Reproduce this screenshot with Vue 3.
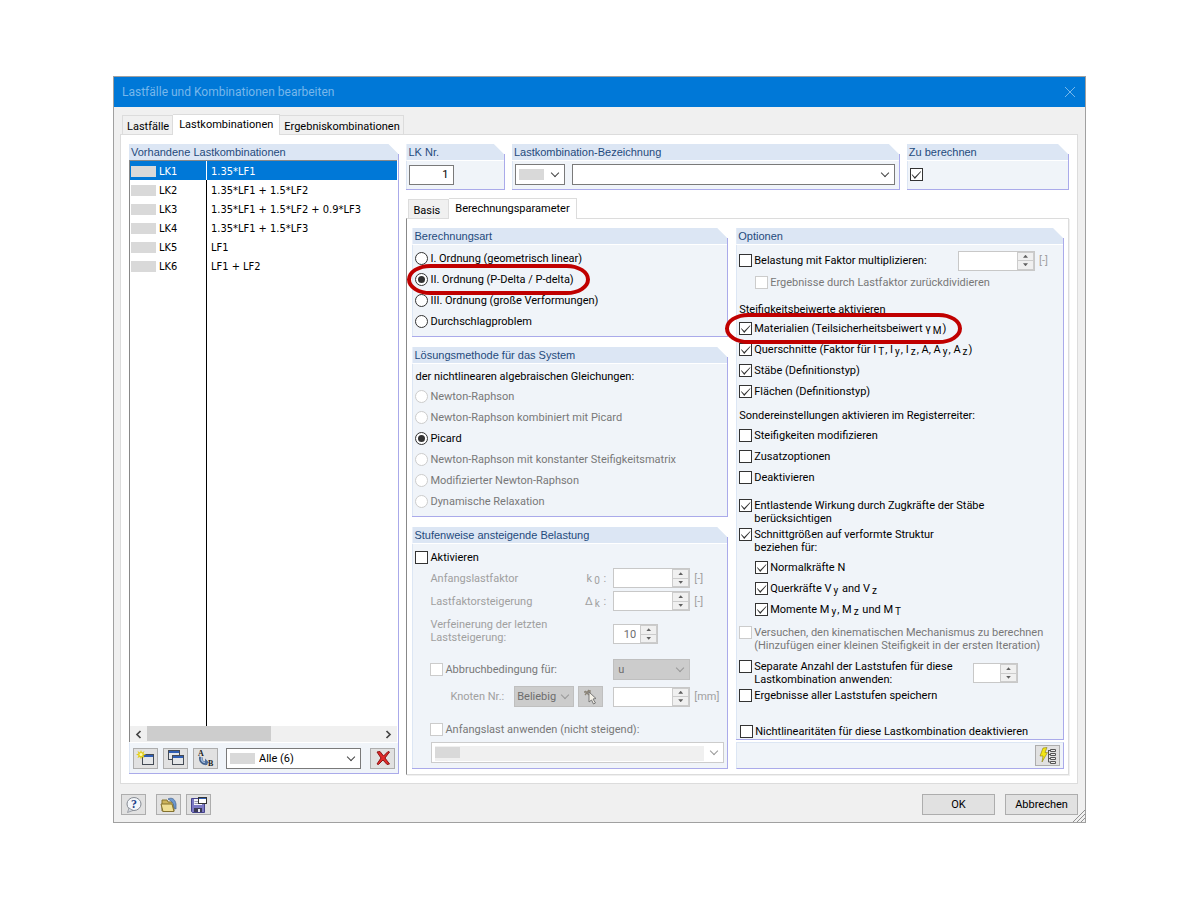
<template>
  <main class="screen">
    <section class="dialog" role="dialog" aria-labelledby="dialog-title">
      <header class="titlebar">
        <h1 id="dialog-title">Lastfälle und Kombinationen bearbeiten</h1>
        <button type="button" class="close" aria-label="Schließen">
          <svg width="12" height="12" viewBox="0 0 12 12"><path d="M1 1l10 10M11 1L1 11" fill="none" stroke="currentColor" /></svg>
        </button>
      </header>

      <div class="content">
        <nav class="tabs main-tabs">
          <button
            v-for="tab in mainTabs"
            :key="tab"
            type="button"
            class="tab"
            :class="{ active: tab === activeMain }"
            @click="activeMain = tab"
          >{{ tab }}</button>
        </nav>

        <div class="pane">
          <!-- Liste der Lastkombinationen -->
          <section class="group list-group">
            <h2>Vorhandene Lastkombinationen</h2>
            <div class="list">
              <table>
                <tbody>
                  <tr
                    v-for="item in combinations"
                    :key="item.id"
                    :class="{ selected: item.id === selected }"
                    @click="selected = item.id"
                  >
                    <td class="col-id"><span class="id-cell"><i class="swatch"></i>{{ item.id }}</span></td>
                    <td class="col-formula">{{ item.formula }}</td>
                  </tr>
                </tbody>
              </table>
            </div>
            <div class="scrollbar">
              <button type="button" class="arrow" aria-label="Nach links">
                <svg width="7" height="9" viewBox="0 0 7 9"><path d="M5.5 1L2 4.500L5.500 8" fill="none" stroke="#444" stroke-width="1.700" /></svg>
              </button>
              <div class="track"><div class="thumb"></div></div>
              <button type="button" class="arrow" aria-label="Nach rechts">
                <svg width="7" height="9" viewBox="0 0 7 9"><path d="M1.500 1L5 4.500L1.500 8" fill="none" stroke="#444" stroke-width="1.700" /></svg>
              </button>
            </div>
            <div class="list-tools">
              <button type="button" class="tool" aria-label="Neu">
                <svg width="20" height="18" viewBox="0 0 20 18">
                  <rect x="6.500" y="5.500" width="11" height="10" fill="#e4e6e8" stroke="#444b55" />
                  <path d="M7 6h10v2H7z" fill="#2f5fb5" />
                  <path d="M5 1l1 2.500L8.500 2 7.500 4.500 10 5.500 7.500 6.500l1 2.500L6 8 5 10.500 4 8 1.500 9l1-2.500L0 5.500l2.500-1L1.500 2 4 3.500z" fill="#e3cf1c" />
                  <circle cx="5" cy="5.500" r="1.500" fill="#fffbb0" />
                </svg>
              </button>
              <button type="button" class="tool" aria-label="Kopieren">
                <svg width="20" height="18" viewBox="0 0 20 18">
                  <rect x="2.500" y="1.500" width="11" height="9" fill="#e4e6e8" stroke="#444b55" />
                  <path d="M3 2h10v2H3z" fill="#2f5fb5" />
                  <rect x="6.500" y="6.500" width="11" height="9" fill="#e4e6e8" stroke="#444b55" />
                  <path d="M7 7h10v2H7z" fill="#2f5fb5" />
                </svg>
              </button>
              <button type="button" class="tool" aria-label="Umnummerieren">
                <svg width="20" height="18" viewBox="0 0 20 18">
                  <text x="2" y="7" class="glyph">A</text>
                  <text x="12" y="17" class="glyph">B</text>
                  <path d="M5 8c-1 4 2 7 6 6" fill="none" stroke="#405c86" stroke-width="3.500" />
                  <path d="M5.500 8c-1 4 2 6 5 5.500" fill="none" stroke="#9db9de" stroke-width="1.500" />
                  <path d="M9 9.500l4 4-4 3z" fill="#4f6f9e" />
                </svg>
              </button>
              <div class="combo filter">
                <i class="swatch"></i>
                <select aria-label="Filter"><option>Alle (6)</option></select>
              </div>
              <button type="button" class="tool" aria-label="Löschen">
                <svg width="18" height="16" viewBox="0 0 18 16">
                  <path d="M3 2l3-.500 3.500 4.500L14 1.500l1.500.5-4.500 6 4.500 6-2.500.500L9 10l-4.500 4.500L3 14l4-6z" fill="#e02a2a" stroke="#8c1515" />
                </svg>
              </button>
            </div>
          </section>

          <div class="details">
            <div class="head-row">
              <section class="group number-group">
                <h2>LK Nr.</h2>
                <div class="head-body"><input class="number" type="text" value="1" aria-label="LK Nr." /></div>
              </section>
              <section class="group name-group">
                <h2>Lastkombination-Bezeichnung</h2>
                <div class="head-body">
                  <div class="combo type-combo">
                    <i class="swatch"></i>
                    <select aria-label="Typ"><option></option></select>
                  </div>
                  <div class="combo name-combo">
                    <select aria-label="Lastkombination-Bezeichnung"><option></option></select>
                  </div>
                </div>
              </section>
              <section class="group calc-group">
                <h2>Zu berechnen</h2>
                <div class="head-body"><input type="checkbox" checked aria-label="Zu berechnen" /></div>
              </section>
            </div>

            <nav class="tabs sub-tabs">
              <button
                v-for="tab in subTabs"
                :key="tab"
                type="button"
                class="tab"
                :class="{ active: tab === activeSub }"
                @click="activeSub = tab"
              >{{ tab }}</button>
            </nav>

            <div class="params">
              <div class="column left">
                <section class="group">
                  <h2>Berechnungsart</h2>
                  <div class="body">
                    <label v-for="type in types" :key="type" class="check row">
                      <input v-model="calcType" type="radio" name="type" :value="type" />
                      <span>{{ type }}</span>
                      <i v-if="type === types[1]" class="marker marker-type"></i>
                    </label>
                  </div>
                </section>

                <section class="group">
                  <h2>Lösungsmethode für das System</h2>
                  <div class="body method-body">
                    <p class="caption">der nichtlinearen algebraischen Gleichungen:</p>
                    <label v-for="name in methods" :key="name" class="check row">
                      <input v-model="method" type="radio" name="method" :value="name" :disabled="name !== 'Picard'" />
                      <span>{{ name }}</span>
                    </label>
                  </div>
                </section>

                <section class="group steps-group">
                  <h2>Stufenweise ansteigende Belastung</h2>
                  <div class="body steps">
                    <label class="check row">
                      <input type="checkbox" />
                      <span>Aktivieren</span>
                    </label>
                    <div class="step">
                      <label for="k0">Anfangslastfaktor</label>
                      <span class="symbol">k<sub>0</sub> :</span>
                      <div class="spin">
                        <input id="k0" type="text" disabled />
                        <span class="updown"><button type="button" disabled aria-label="Mehr"></button><button type="button" disabled aria-label="Weniger"></button></span>
                      </div>
                      <span class="unit">[-]</span>
                    </div>
                    <div class="step">
                      <label for="dk">Lastfaktorsteigerung</label>
                      <span class="symbol">Δ<sub>k</sub> :</span>
                      <div class="spin">
                        <input id="dk" type="text" disabled />
                        <span class="updown"><button type="button" disabled aria-label="Mehr"></button><button type="button" disabled aria-label="Weniger"></button></span>
                      </div>
                      <span class="unit">[-]</span>
                    </div>
                    <div class="step refine">
                      <label for="refine">Verfeinerung der letzten<br />Laststeigerung:</label>
                      <span class="symbol"></span>
                      <div class="spin small">
                        <input id="refine" type="text" value="10" disabled />
                        <span class="updown"><button type="button" disabled aria-label="Mehr"></button><button type="button" disabled aria-label="Weniger"></button></span>
                      </div>
                      <span class="unit"></span>
                    </div>
                    <div class="step stop">
                      <label class="check">
                        <input type="checkbox" disabled />
                        <span>Abbruchbedingung für:</span>
                      </label>
                      <span class="symbol"></span>
                      <div class="combo flat">
                        <select disabled aria-label="Abbruchbedingung"><option>u</option></select>
                      </div>
                      <span class="unit"></span>
                    </div>
                    <div class="step node">
                      <div class="node-pick">
                        <label for="node">Knoten Nr.:</label>
                        <div class="combo flat node-combo">
                          <select id="node" disabled><option>Beliebig</option></select>
                        </div>
                        <button type="button" class="tool pick" disabled aria-label="Knoten wählen">
                          <svg width="18" height="18" viewBox="0 0 18 18">
                            <path d="M3 3l4 4M7 2L3 7M2 4h6M8 2v5" stroke="#8b8478" stroke-width="1.300" fill="none" />
                            <path d="M7 4l7 6.500-3 .5 2.500 4-2 1-2-4L7 14z" fill="#f4f1e8" stroke="#777" />
                          </svg>
                        </button>
                      </div>
                      <span class="symbol"></span>
                      <div class="spin">
                        <input type="text" disabled aria-label="Grenzwert" />
                        <span class="updown"><button type="button" disabled aria-label="Mehr"></button><button type="button" disabled aria-label="Weniger"></button></span>
                      </div>
                      <span class="unit">[mm]</span>
                    </div>
                    <label class="check initial">
                      <input type="checkbox" disabled />
                      <span>Anfangslast anwenden (nicht steigend):</span>
                    </label>
                    <div class="combo initial-combo">
                      <i class="swatch"></i>
                      <select disabled aria-label="Anfangslast"><option></option></select>
                    </div>
                  </div>
                </section>
              </div>

              <div class="column right">
                <section class="group options-group">
                  <h2>Optionen</h2>
                  <div class="body options">
                    <div class="factor">
                      <label class="check">
                        <input type="checkbox" />
                        <span>Belastung mit Faktor multiplizieren:</span>
                      </label>
                      <div class="spin">
                        <input type="text" disabled aria-label="Faktor" />
                        <span class="updown"><button type="button" disabled aria-label="Mehr"></button><button type="button" disabled aria-label="Weniger"></button></span>
                      </div>
                      <span class="unit">[-]</span>
                    </div>
                    <label class="check row sub">
                      <input type="checkbox" disabled />
                      <span>Ergebnisse durch Lastfaktor zurückdividieren</span>
                    </label>

                    <p class="caption stiffness">Steifigkeitsbeiwerte aktivieren</p>
                    <label v-for="(text, i) in stiffness" :key="text" class="check row">
                      <input type="checkbox" checked />
                      <span><template v-for="(part, n) in split(text)" :key="n"><sub v-if="n % 2">{{ part }}</sub><template v-else>{{ part }}</template></template></span>
                      <i v-if="i === 0" class="marker marker-material"></i>
                    </label>

                    <p class="caption special">Sondereinstellungen aktivieren im Registerreiter:</p>
                    <label v-for="text in special" :key="text" class="check row">
                      <input type="checkbox" />
                      <span>{{ text }}</span>
                    </label>

                    <label class="check relief">
                      <input type="checkbox" checked />
                      <span>Entlastende Wirkung durch Zugkräfte der Stäbe<br />berücksichtigen</span>
                    </label>
                    <label class="check forces">
                      <input type="checkbox" checked />
                      <span>Schnittgrößen auf verformte Struktur<br />beziehen für:</span>
                    </label>
                    <div class="force-list">
                      <label v-for="text in forces" :key="text" class="check row sub">
                        <input type="checkbox" checked />
                        <span><template v-for="(part, n) in split(text)" :key="n"><sub v-if="n % 2">{{ part }}</sub><template v-else>{{ part }}</template></template></span>
                      </label>
                    </div>
                    <label class="check mechanism">
                      <input type="checkbox" disabled />
                      <span>Versuchen, den kinematischen Mechanismus zu berechnen<br />(Hinzufügen einer kleinen Steifigkeit in der ersten Iteration)</span>
                    </label>
                    <div class="separate">
                      <label class="check">
                        <input type="checkbox" />
                        <span>Separate Anzahl der Laststufen für diese<br />Lastkombination anwenden:</span>
                      </label>
                      <div class="spin small">
                        <input type="text" disabled aria-label="Anzahl der Laststufen" />
                        <span class="updown"><button type="button" disabled aria-label="Mehr"></button><button type="button" disabled aria-label="Weniger"></button></span>
                      </div>
                    </div>
                    <label class="check save">
                      <input type="checkbox" />
                      <span>Ergebnisse aller Laststufen speichern</span>
                    </label>
                    <label class="check nonlinear">
                      <input type="checkbox" />
                      <span>Nichtlinearitäten für diese Lastkombination deaktivieren</span>
                    </label>
                  </div>
                </section>
                <div class="option-tools">
                  <button type="button" class="tool" aria-label="Berechnungsparameter">
                    <svg width="20" height="18" viewBox="0 0 20 18">
                      <path d="M5 1l4-.500-2 5h2.500L4 15l1-6H2z" fill="#f2e614" stroke="#8a7d10" stroke-width=".6" />
                      <path d="M10.500 3v12M10.500 3.500h2M10.500 7.500h2M10.500 11.500h2M10.500 15h2" stroke="#555" fill="none" />
                      <path d="M12.500 2.500h5v2h-5zM12.500 6.500h5v2h-5zM12.500 10.500h5v2h-5zM12.500 14.500h5v2h-5z" fill="#eee" stroke="#555" />
                    </svg>
                  </button>
                </div>
              </div>
            </div>
          </div>
        </div>

        <footer class="footer">
          <button type="button" class="tool help" aria-label="Hilfe">
            <svg width="18" height="18" viewBox="0 0 18 18">
              <ellipse cx="9" cy="8" rx="7" ry="6.500" fill="#f3f6fa" stroke="#868b93" />
              <path d="M4 12l-1.500 4.500L8 14.500z" fill="#d5d9df" stroke="#868b93" stroke-width=".7" />
              <text x="6" y="12" class="question">?</text>
            </svg>
          </button>
          <button type="button" class="tool open" aria-label="Öffnen">
            <svg width="20" height="18" viewBox="0 0 20 18">
              <path d="M3 4h5l1 2h6v9H3z" fill="#cdb45b" stroke="#84722f" />
              <path d="M9 3c4-2 7 0 8 5v5l-2-1c0-4-2-7-6-9z" fill="#6f9bd0" stroke="#3f6090" stroke-width=".7" />
              <path d="M2 8h11l2 7.500H4z" fill="#efdf94" stroke="#84722f" />
            </svg>
          </button>
          <button type="button" class="tool" aria-label="Speichern">
            <svg width="20" height="18" viewBox="0 0 20 18">
              <path d="M2.500 2.500h13v14h-12l-1-1z" fill="#7c79c4" stroke="#45438a" />
              <path d="M5 3h8v6H5z" fill="#f4f4fa" />
              <path d="M5.500 5.500h5M5.500 7.500h5" stroke="#9a9ab2" />
              <path d="M5 12h8v4H5z" fill="#3c3c55" />
              <path d="M9 13h2v3H9z" fill="#e8e8f2" />
              <rect x="9.500" y="1.500" width="8" height="6" fill="#fff" stroke="#333" />
              <path d="M10 2h7v1h-7z" fill="#2f5fb5" />
            </svg>
          </button>
          <span class="spacer"></span>
          <button type="button" class="push">OK</button>
          <button type="button" class="push">Abbrechen</button>
        </footer>
      </div>
      <svg class="grip" width="12" height="12" viewBox="0 0 12 12"><path d="M0 12L12 0M4 12l8-8M8 12l4-4" fill="none" stroke="#909090" /></svg>
    </section>
  </main>
</template>

<script setup>
import { ref } from 'vue'

const mainTabs = ['Lastfälle', 'Lastkombinationen', 'Ergebniskombinationen']
const subTabs = ['Basis', 'Berechnungsparameter']
const activeMain = ref('Lastkombinationen')
const activeSub = ref('Berechnungsparameter')

const combinations = [
  { id: 'LK1', formula: '1.35*LF1' },
  { id: 'LK2', formula: '1.35*LF1 + 1.5*LF2' },
  { id: 'LK3', formula: '1.35*LF1 + 1.5*LF2 + 0.9*LF3' },
  { id: 'LK4', formula: '1.35*LF1 + 1.5*LF3' },
  { id: 'LK5', formula: 'LF1' },
  { id: 'LK6', formula: 'LF1 + LF2' }
]
const selected = ref('LK1')

const types = [
  'I. Ordnung (geometrisch linear)',
  'II. Ordnung (P-Delta / P-delta)',
  'III. Ordnung (große Verformungen)',
  'Durchschlagproblem'
]
const calcType = ref(types[1])

const methods = [
  'Newton-Raphson',
  'Newton-Raphson kombiniert mit Picard',
  'Picard',
  'Newton-Raphson mit konstanter Steifigkeitsmatrix',
  'Modifizierter Newton-Raphson',
  'Dynamische Relaxation'
]
const method = ref('Picard')

// "_x" steht für einen tiefgestellten Index x
const stiffness = [
  'Materialien (Teilsicherheitsbeiwert γ_M)',
  'Querschnitte (Faktor für I_T, I_y, I_z, A, A_y, A_z)',
  'Stäbe (Definitionstyp)',
  'Flächen (Definitionstyp)'
]
const special = ['Steifigkeiten modifizieren', 'Zusatzoptionen', 'Deaktivieren']
const forces = ['Normalkräfte N', 'Querkräfte V_y and V_z', 'Momente M_y, M_z und M_T']

const split = (text) => text.split(/_(\w)/)
</script>

<style>
body {
  margin: 0;
  background: #fff;
}
</style>

<style scoped>
.screen {
  padding: 76px 114px 76px 113px;
  font-family: Roboto, 'DejaVu Sans Condensed', sans-serif;
  font-size: 11px;
  line-height: 13px;
  color: #000;
}

.screen *,
.screen *::before,
.screen *::after {
  box-sizing: border-box;
}

button,
input,
select {
  font: inherit;
  color: inherit;
  margin: 0;
}

p,
h1,
h2 {
  margin: 0;
  font-weight: 400;
}

.dialog {
  position: relative;
  background: #f0f0f0;
  border: 1px solid #a0a0a0;
}

.titlebar {
  display: flex;
  align-items: center;
  justify-content: space-between;
  height: 30px;
  padding: 0 9px 0 8px;
  background: #0078d7;
  color: #77b7eb;
}

.titlebar h1 {
  font: 12px/16px Roboto, 'Open Sans', sans-serif;
}

.close {
  display: flex;
  padding: 0;
  border: 0;
  background: none;
}

.content {
  padding: 7px 7px 7px 6px;
}

/* Registerkarten */
.tabs {
  display: flex;
  align-items: flex-end;
}

.main-tabs {
  height: 20px;
  padding-left: 2px;
}

.sub-tabs {
  height: 20px;
  margin-top: 8px;
  padding-left: 2px;
}

.tab {
  height: 19px;
  padding: 2px 4px 0;
  border: 1px solid #dcdcdc;
  border-bottom: 0;
  background: #f0f0f0;
  white-space: nowrap;
}

.tab + .tab {
  border-left: 0;
}

.main-tabs .tab {
  padding-right: 3px;
}

.sub-tabs .tab {
  padding-right: 8px;
}

.tab.active {
  position: relative;
  height: 21px;
  margin-bottom: -1px;
  padding: 0 6px 2px;
  background: #fff;
}

.pane {
  display: flex;
  gap: 7px;
  padding: 9px 8px 8px 8px;
  border: 1px solid #dcdcdc;
  background: #fff;
}

/* Gruppenrahmen mit abgeschrägter Ecke */
.group {
  display: flex;
  flex-direction: column;
  padding-right: 1px;
  border-bottom: 1px solid #aaaaea;
  background: linear-gradient(#aaaaea, #aaaaea) right bottom / 1px calc(100% - 10px) no-repeat;
}

.group h2 {
  height: 17px;
  padding-left: 2px;
  border-bottom: 1px solid #fff;
  background: #dce6f4;
  color: #1f4a7c;
  font: 11px/17px 'Liberation Sans', Arial, sans-serif;
  clip-path: polygon(0 0, calc(100% - 10px) 0, 100% 10px, 100% 100%, 0 100%);
  white-space: nowrap;
}

.group.list-group h2 {
  height: 16px;
  border-bottom: 0;
}

.body,
.head-body {
  flex: 1;
  background: #f0f4f9;
  border-left: 1px solid #dce6f4;
}

.list-group {
  flex: 270 1 0;
  min-width: 0;
  margin-bottom: 1px;
}

.list {
  flex: 1;
  overflow: hidden;
  border: 1px solid #888;
  border-width: 1px 0 0 1px;
  background: linear-gradient(#000, #000) 76px 0 / 1px 100% no-repeat #fff;
  margin-right: 1px;
}

.list table {
  width: 100%;
  border-collapse: collapse;
  font-family: 'DejaVu Sans Condensed', 'DejaVu Sans', sans-serif;
}

.list td {
  height: 19px;
  padding: 1px 0 0;
}

.list .col-id {
  width: 76px;
}

.id-cell {
  display: flex;
  align-items: center;
  gap: 3px;
  padding-left: 1px;
}

.list .col-formula {
  padding-left: 5px;
}

.selected {
  background: #0078d7;
  color: #fff;
}

.selected .col-formula {
  background: linear-gradient(#fff, #fff) 0 0 / 1px 100% no-repeat;
}

.swatch {
  flex: none;
  width: 25px;
  height: 11px;
  background: #d9d9d9;
}

.scrollbar {
  display: flex;
  height: 16px;
  margin-right: 1px;
  border-left: 1px solid #888;
  background: #f0f0f0;
}

.arrow {
  display: flex;
  align-items: center;
  justify-content: center;
  width: 17px;
  padding: 0;
  border: 0;
  background: none;
}

.track {
  flex: 1;
}

.thumb {
  width: 53%;
  height: 15px;
  background: #cdcdcd;
}

.list-tools {
  display: flex;
  align-items: center;
  gap: 5px;
  height: 31px;
  padding: 0 3px;
  border-top: 1px solid #fff;
  border-left: 1px solid #dce6f4;
  background: #f0f4f9;
}

.tool {
  display: flex;
  flex: none;
  align-items: center;
  justify-content: center;
  width: 25px;
  height: 21px;
  padding: 0;
  border: 1px solid #adadad;
  background: #e1e1e1;
}

.glyph {
  font: bold 8px 'Liberation Serif', serif;
  fill: #222;
}

.question {
  font: bold 12px 'Liberation Serif', serif;
  fill: #213f86;
}

/* Auswahlfelder */
.combo {
  position: relative;
  display: flex;
  align-items: center;
  height: 21px;
  border: 1px solid #7a7a7a;
  background: #fff;
}

.combo::after {
  content: '';
  position: absolute;
  right: 6px;
  top: 5px;
  width: 6px;
  height: 6px;
  border: solid #444;
  border-width: 0 1px 1px 0;
  transform: rotate(45deg);
  pointer-events: none;
}

.combo .swatch {
  margin-left: 3px;
}

.combo select {
  flex: 1;
  min-width: 0;
  height: 100%;
  padding: 0 18px 0 4px;
  border: 0;
  background: none;
  appearance: none;
  opacity: 1;
}

.filter {
  flex: 1;
  margin: 0 4px 0 3px;
}

.combo.flat {
  background: #cccccc;
  border-color: #bfbfbf;
  color: #6d6d6d;
}

.combo.flat::after,
.initial-combo::after {
  border-color: #999;
}

.details {
  flex: 664 1 0;
  min-width: 0;
  display: flex;
  flex-direction: column;
}

.head-row {
  display: flex;
  gap: 7px;
}

.number-group {
  flex: 98 1 0;
}

.name-group {
  flex: 389 1 0;
}

.calc-group {
  flex: 162 1 0;
}

.head-body {
  display: flex;
  align-items: center;
  gap: 7px;
  min-height: 28px;
  padding: 0 4px 1px 2px;
}

.number {
  width: 45px;
  height: 20px;
  padding: 0 5px;
  border: 1px solid #7a7a7a;
  text-align: right;
}

.type-combo {
  width: 50px;
}

.name-combo {
  flex: 1;
}

/* Parameterseite */
.params {
  flex: 1;
  display: flex;
  gap: 8px;
  padding: 9px 4px 5px 5px;
  border: 1px solid #dcdcdc;
  border-left-color: #888;
  box-shadow: 1px 1px 0 #f0f0f0;
}

.column {
  display: flex;
  flex-direction: column;
  min-width: 0;
}

.left {
  flex: 316 1 0;
  gap: 10px;
}

.right {
  flex: 328 1 0;
  gap: 2px;
}

.body {
  padding: 3px 2px 4px;
}

.steps-group,
.options-group {
  flex: 1;
}

.check {
  position: relative;
  display: flex;
  align-items: flex-start;
  gap: 2px;
  white-space: nowrap;
}

.row {
  height: 21px;
  align-items: center;
}

.check input {
  flex: none;
}

.check input:disabled + span {
  color: #787878;
}

input[type='checkbox'],
input[type='radio'] {
  display: block;
  width: 13px;
  height: 13px;
  border: 1px solid #333;
  background: #fff;
  appearance: none;
}

input[type='radio'] {
  border-radius: 50%;
}

input[type='checkbox']:disabled,
input[type='radio']:disabled {
  border-color: #ccc;
}

input[type='radio']:checked::before {
  content: '';
  display: block;
  width: 7px;
  height: 7px;
  margin: 2px;
  border-radius: 50%;
  background: #333;
}

input[type='checkbox']:checked::before {
  content: '';
  display: block;
  width: 11px;
  height: 11px;
  background: #333;
  clip-path: polygon(1px 5px, 4px 8px, 10px 2px, 10px 3px, 4px 10px, 1px 6px);
}

sub {
  margin: 0 1px 0 2px;
  font-size: 10px;
  line-height: 1px;
  vertical-align: -2px;
}

.caption {
  height: 16px;
  line-height: 16px;
  white-space: nowrap;
}

.method-body .caption {
  margin: 2px 0 1px;
}

/* rote Hervorhebungen */
.marker {
  position: absolute;
  z-index: 1;
  top: -5px;
  height: 31px;
  border: 4px solid #c00000;
  border-radius: 24px / 16px;
}

.marker-type {
  left: -8px;
  width: 183px;
}

.marker-material {
  left: -14px;
  width: 237px;
}

/* Laststufen */
.steps .step {
  display: grid;
  grid-template-columns: 1fr auto 77px 35px;
  align-items: center;
  min-height: 20px;
  margin-bottom: 3px;
  padding-left: 15px;
  color: #a0a0a0;
  white-space: nowrap;
}

.symbol {
  padding-right: 7px;
}

.unit {
  padding-left: 4px;
  color: #a0a0a0;
}

.steps .refine {
  margin-top: 7px;
}

.steps .refine .spin {
  align-self: end;
}

.steps .stop {
  margin: 15px 0 6px;
}

.node-pick {
  display: flex;
  align-items: center;
  justify-content: flex-end;
  gap: 4px;
}

.node-pick label {
  margin-right: 6px;
}

.node-pick .combo {
  width: 60px;
}

.node-combo select {
  padding-left: 2px;
  padding-right: 0;
}

.node-combo::after {
  right: 5px;
}

.steps .node .symbol {
  padding-right: 10px;
}

.pick {
  border-color: #bfbfbf;
  background: #ccc;
}

.initial {
  margin: 16px 0 6px 15px;
}

.initial-combo {
  margin: 0 1px 0 16px;
  border-color: #ccc;
  background: linear-gradient(#f0f0f0, #f0f0f0) 3px 3px / calc(100% - 22px) 15px no-repeat #fff;
}

.spin {
  display: flex;
  width: 77px;
  height: 20px;
  border: 1px solid #c8c8c8;
  background: #fff;
}

.spin.small {
  width: 45px;
}

.spin input {
  flex: 1;
  min-width: 0;
  padding: 0 4px;
  border: 0;
  background: none;
  color: #6d6d6d;
  text-align: right;
}

.updown {
  display: flex;
  flex-direction: column;
  gap: 1px;
  width: 17px;
  padding: 1px;
  background: #ccc;
}

.updown button {
  display: flex;
  flex: 1;
  align-items: center;
  justify-content: center;
  padding: 0;
  border: 0;
  background: #f0f0f0;
}

.updown button::before {
  content: '';
  width: 5px;
  height: 3px;
  background: #606060;
  clip-path: polygon(50% 0, 100% 100%, 0 100%);
}

.updown button:last-child::before {
  clip-path: polygon(0 0, 100% 0, 50% 100%);
}

/* Optionen */
.options {
  padding: 4px 2px 1px;
}

.factor,
.separate {
  display: flex;
  align-items: center;
  height: 23px;
}

.factor .check,
.separate .check {
  flex: 1;
}

.factor .unit {
  width: 26px;
}

.options .sub {
  margin-left: 16px;
}

.stiffness {
  margin-top: 9px;
}

.special {
  margin: 6px 0 1px;
}

.relief {
  margin: 11px 0 3px;
}

.force-list {
  margin: 3px 0 6px;
}

.separate {
  height: 26px;
  margin: 8px 0 3px;
}

.separate .spin {
  margin-right: 43px;
}

.nonlinear {
  margin: 23px 0 0 1px;
}

.option-tools {
  display: flex;
  align-items: center;
  justify-content: flex-end;
  height: 27px;
  padding-right: 3px;
  border: 1px solid #aaaaea;
  border-color: #dce6f4 #aaaaea #aaaaea #dce6f4;
  background: #f0f4f9;
}

.footer {
  display: flex;
  gap: 5px;
  padding: 10px 0 0 1px;
}

.help {
  margin-right: 5px;
}

.spacer {
  flex: 1;
}

.push {
  width: 73px;
  height: 21px;
  padding: 0;
  border: 1px solid #adadad;
  background: #e1e1e1;
}

.push + .push {
  margin-left: 5px;
}

.grip {
  position: absolute;
  right: 0;
  bottom: 0;
}
</style>
